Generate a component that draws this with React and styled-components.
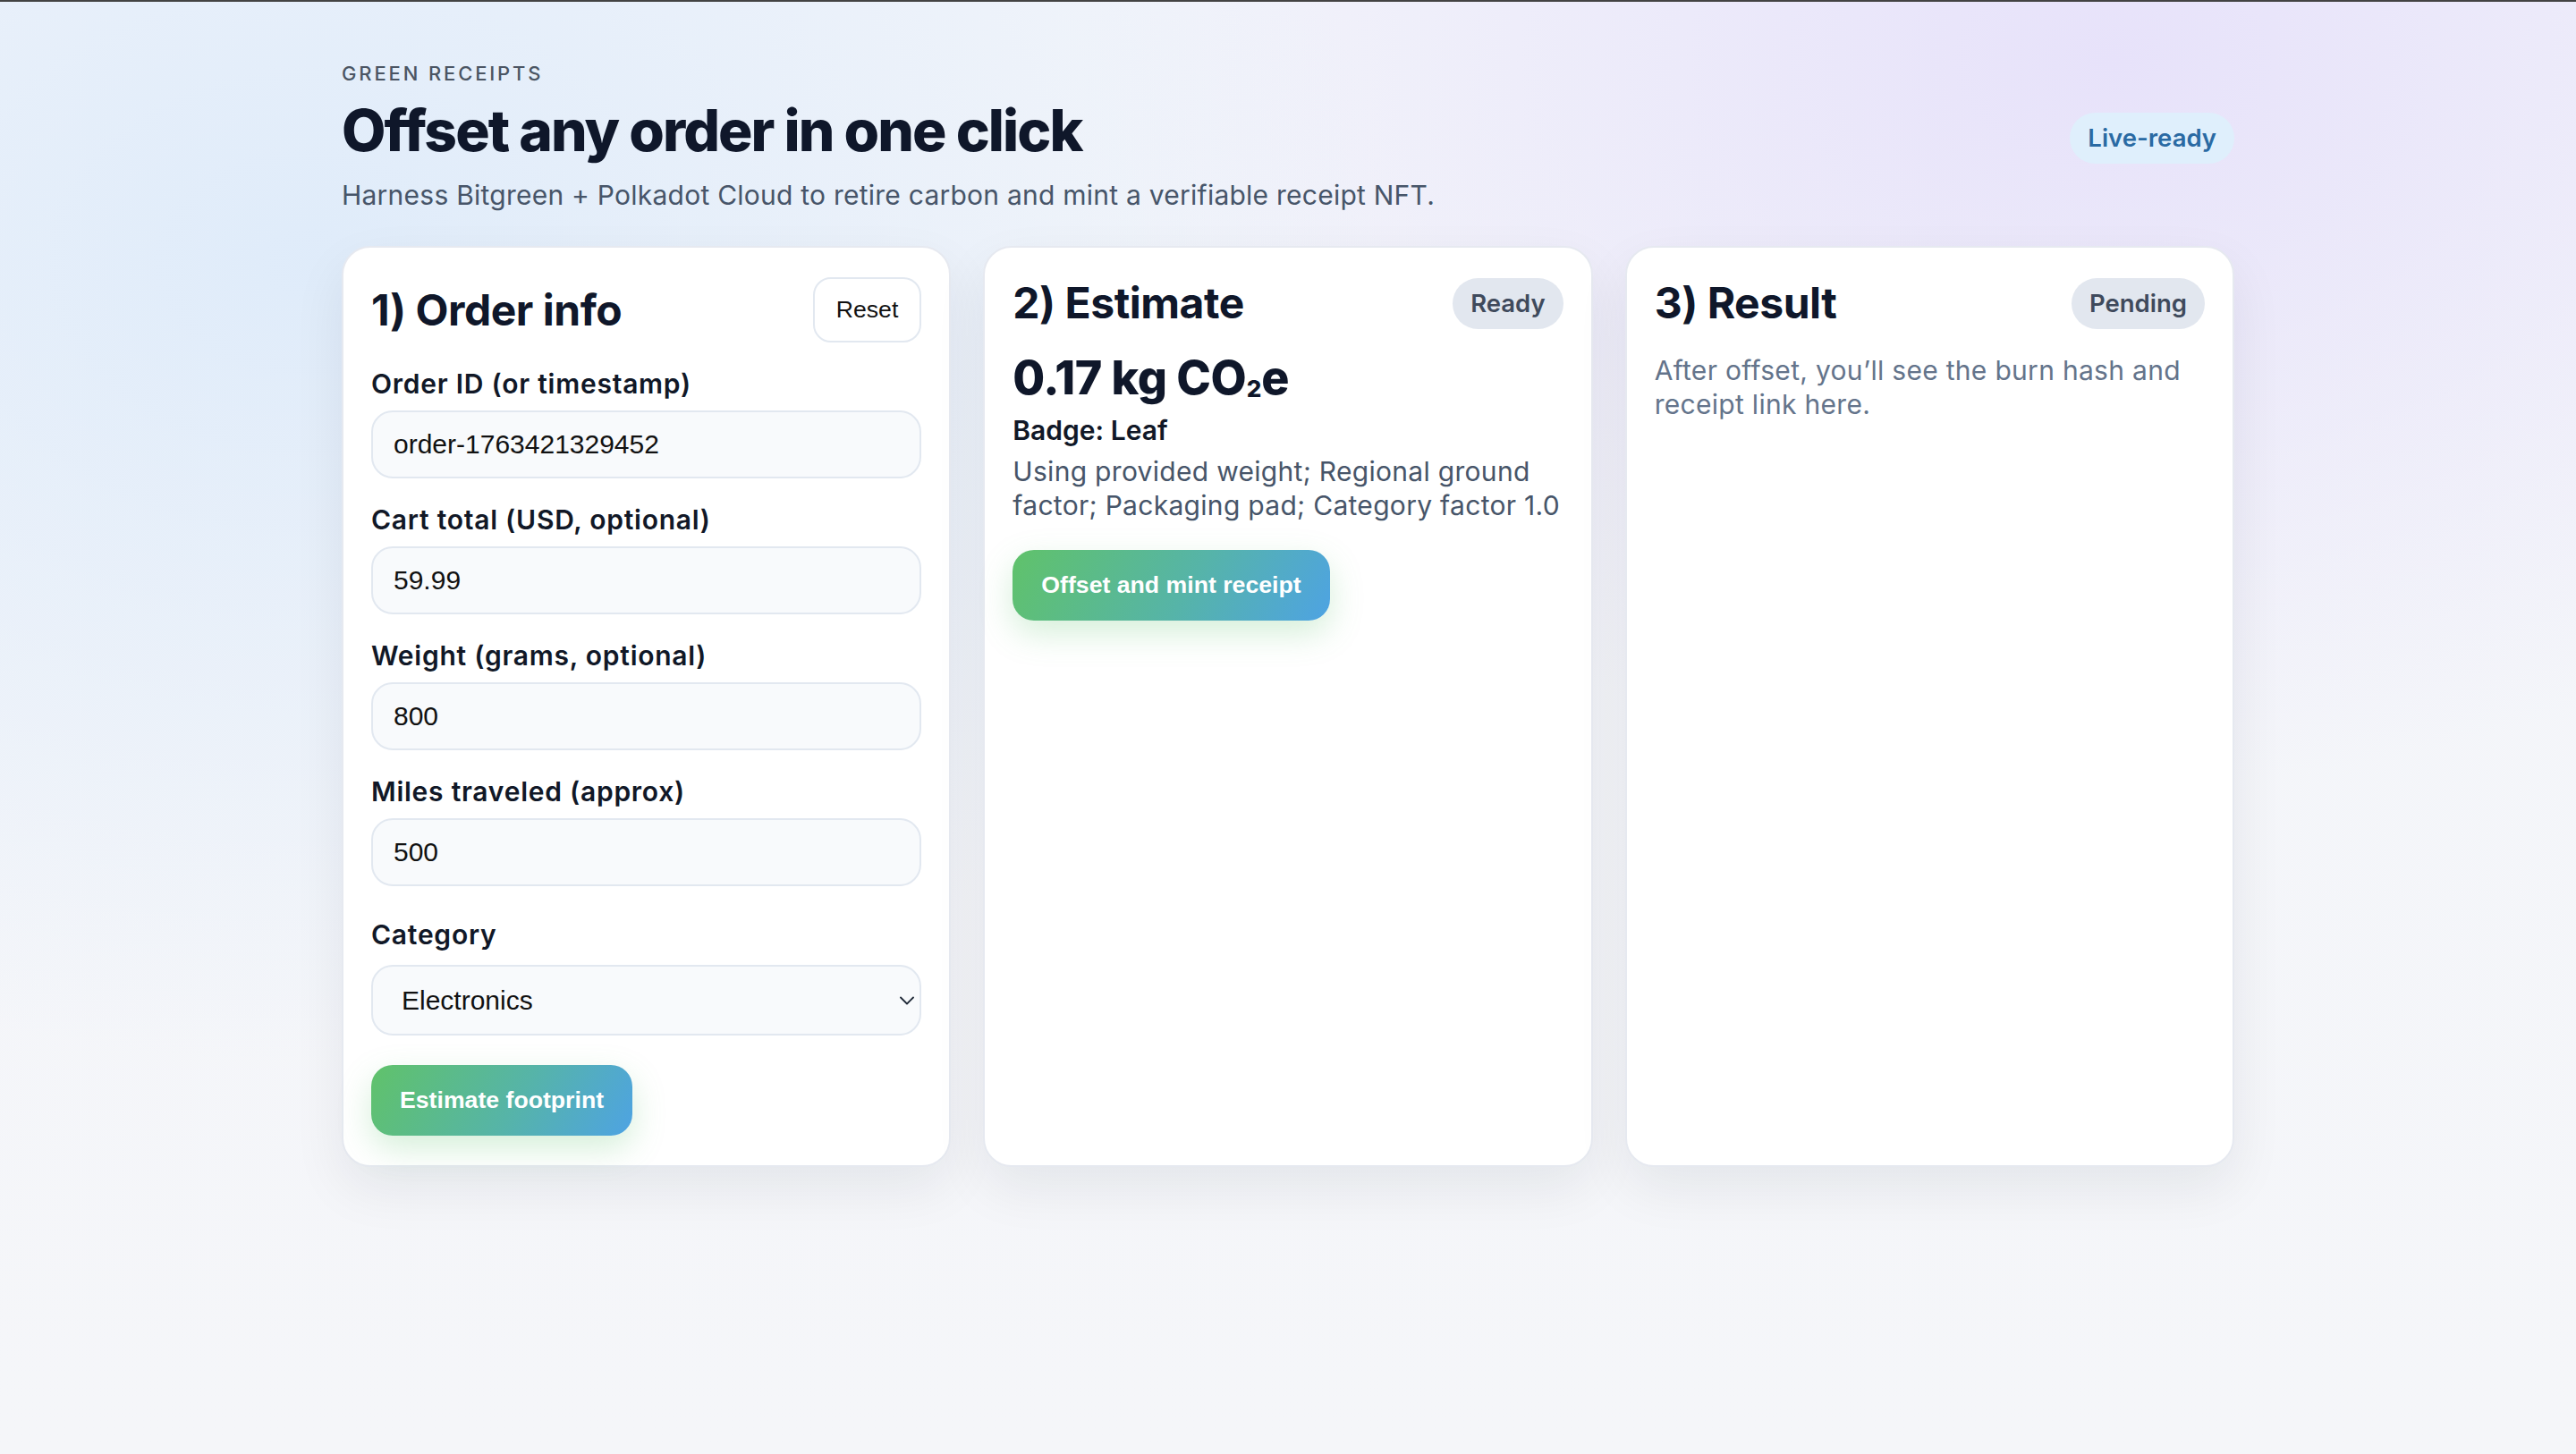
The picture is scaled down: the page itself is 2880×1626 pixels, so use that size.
import React from "react";
import styled, { createGlobalStyle, css } from "styled-components";

const GlobalStyle = createGlobalStyle`
  html, body { margin: 0; padding: 0; }
  body {
    font-family: Inter, "Noto Sans", sans-serif;
    background: #f5f6f9;
    -webkit-font-smoothing: antialiased;
  }
  *, *::before, *::after { box-sizing: border-box; }
`;

const Page = styled.div`
  min-height: 100vh;
  border-top: 2px solid #434343;
  padding: 67px 0 80px;
  background:
    radial-gradient(42% 55% at 12% 18%, rgba(222, 235, 250, 0.95) 0%, rgba(222, 235, 250, 0) 100%),
    radial-gradient(40% 50% at 82% 4%, rgba(231, 226, 250, 1) 0%, rgba(231, 226, 250, 0) 100%),
    linear-gradient(180deg, #f3f5fa 0%, #f5f6f9 100%);
`;

const Container = styled.main`
  width: 2116px;
  margin: 0 auto;
`;

const Header = styled.header`
  display: flex;
  justify-content: space-between;
  align-items: center;
  margin-bottom: 36px;
`;

const HeaderText = styled.div`
  display: flex;
  flex-direction: column;
  gap: 16px;
`;

const Eyebrow = styled.div`
  font-size: 22px;
  line-height: 26px;
  font-weight: 500;
  letter-spacing: 0.13em;
  text-transform: uppercase;
  color: #4b5563;
`;

const Title = styled.h1`
  margin: 0;
  font-size: 64px;
  line-height: 70px;
  font-weight: 800;
  letter-spacing: -0.03em;
  color: #0f172a;
`;

const Subtitle = styled.p`
  margin: 0;
  font-size: 30px;
  line-height: 42px;
  letter-spacing: 0.008em;
  color: #475569;
`;

const pillTones = {
  info: css`
    background: #dfeffc;
    color: #2a6aa3;
  `,
  neutral: css`
    background: #e2e7ef;
    color: #3f4a5c;
  `,
};

const Pill = styled.span`
  display: inline-flex;
  align-items: center;
  height: 57px;
  padding: 0 20px;
  border-radius: 999px;
  font-size: 27.5px;
  font-weight: 600;
  white-space: nowrap;
  ${(p) => pillTones[p.$tone || "neutral"]}
`;

const Grid = styled.section`
  display: grid;
  grid-template-columns: repeat(3, 1fr);
  gap: 36px;
  align-items: stretch;
`;

const Card = styled.div`
  display: flex;
  flex-direction: column;
  background: #ffffff;
  border: 2px solid #e6e9f0;
  border-radius: 32px;
  padding: 33px 31px 33px;
  box-shadow: 0 24px 60px rgba(15, 23, 42, 0.07);
`;

const CardHead = styled.div`
  display: flex;
  justify-content: space-between;
  align-items: center;
`;

const CardTitle = styled.h2`
  margin: 0;
  font-size: 48px;
  line-height: 58px;
  font-weight: 700;
  letter-spacing: -0.01em;
  color: #0f172a;
`;

const GhostButton = styled.button`
  height: 73px;
  padding: 0 24px;
  border: 2px solid #e2e8f0;
  border-radius: 20px;
  background: #ffffff;
  font-family: "Liberation Sans", Arial, sans-serif;
  font-size: 26.67px;
  color: #111111;
  cursor: pointer;
`;

const Form = styled.form`
  display: flex;
  flex-direction: column;
  gap: 28px;
  margin-top: 28px;
`;

const Field = styled.label`
  display: flex;
  flex-direction: column;
  gap: ${(p) => (p.$loose ? 16 : 12)}px;
  margin-top: ${(p) => (p.$loose ? 8 : 0)}px;
`;

const LabelText = styled.span`
  font-size: 30px;
  line-height: 36px;
  font-weight: 600;
  letter-spacing: 0.025em;
  color: #111827;
`;

const fieldBox = css`
  width: 100%;
  border: 2px solid #e2e8f0;
  border-radius: 24px;
  background: #f8fafc;
  font-family: "Liberation Sans", Arial, sans-serif;
  font-size: 30px;
  color: #111111;
  outline: none;
`;

const Input = styled.input`
  ${fieldBox}
  height: 76px;
  padding: 0 23px;
`;

const SelectWrap = styled.div`
  position: relative;
`;

const Select = styled.select`
  ${fieldBox}
  height: 79px;
  padding: 0 60px 0 32px;
  appearance: none;
  -webkit-appearance: none;
`;

const Chevron = styled.svg`
  position: absolute;
  right: 8px;
  top: 50%;
  transform: translateY(-50%);
  pointer-events: none;
`;

const PrimaryButton = styled.button`
  align-self: flex-start;
  height: 79px;
  padding: 0 32px;
  margin-top: ${(p) => p.$offset || 0}px;
  border: none;
  border-radius: 24px;
  background: linear-gradient(120deg, #60c26a 0%, #56b4a8 55%, #4ea3e3 100%);
  color: #ffffff;
  font-family: "Liberation Sans", Arial, sans-serif;
  font-size: 26.67px;
  font-weight: 700;
  box-shadow: 0 14px 36px rgba(94, 193, 107, 0.26);
  cursor: pointer;
`;

const Body = styled.div`
  display: flex;
  flex-direction: column;
  margin-top: 24px;
`;

const Amount = styled.div`
  font-size: 52px;
  line-height: 62px;
  font-weight: 800;
  letter-spacing: -0.01em;
  color: #0f172a;
`;

const Sub = styled.sub`
  font-size: 0.5em;
  line-height: 0;
  vertical-align: -0.12em;
  margin: 0 0.02em;
`;

const BadgeLine = styled.div`
  margin-top: 8px;
  font-size: 30px;
  line-height: 38px;
  font-weight: 600;
  color: #111827;
`;

const Text = styled.p`
  margin: ${(p) => p.$top || 0}px 0 0;
  font-size: 30px;
  line-height: 38px;
  letter-spacing: 0.01em;
  color: ${(p) => (p.$muted ? "#64748b" : "#475569")};
`;

const fields = [
  { label: "Order ID (or timestamp)", value: "order-1763421329452" },
  { label: "Cart total (USD, optional)", value: "59.99" },
  { label: "Weight (grams, optional)", value: "800" },
  { label: "Miles traveled (approx)", value: "500" },
];

export default function App() {
  return (
    <>
      <GlobalStyle />
      <Page>
        <Container>
          <Header>
            <HeaderText>
              <Eyebrow>Green receipts</Eyebrow>
              <Title>Offset any order in one click</Title>
              <Subtitle>
                Harness Bitgreen + Polkadot Cloud to retire carbon and mint a verifiable receipt NFT.
              </Subtitle>
            </HeaderText>
            <Pill $tone="info">Live-ready</Pill>
          </Header>

          <Grid>
            <Card>
              <CardHead>
                <CardTitle>1) Order info</CardTitle>
                <GhostButton type="button">Reset</GhostButton>
              </CardHead>
              <Form onSubmit={(e) => e.preventDefault()}>
                {fields.map((f) => (
                  <Field key={f.label}>
                    <LabelText>{f.label}</LabelText>
                    <Input defaultValue={f.value} />
                  </Field>
                ))}
                <Field $loose>
                  <LabelText>Category</LabelText>
                  <SelectWrap>
                    <Select defaultValue="electronics">
                      <option value="electronics">Electronics</option>
                      <option value="apparel">Apparel</option>
                      <option value="home">Home</option>
                    </Select>
                    <Chevron width="16" height="10" viewBox="0 0 16 10" fill="none">
                      <path d="M1 1.5L8 8.5L15 1.5" stroke="#1f2937" strokeWidth="1.8" strokeLinecap="round" strokeLinejoin="round" />
                    </Chevron>
                  </SelectWrap>
                </Field>
                <PrimaryButton type="submit" $offset={5}>Estimate footprint</PrimaryButton>
              </Form>
            </Card>

            <Card>
              <CardHead>
                <CardTitle>2) Estimate</CardTitle>
                <Pill>Ready</Pill>
              </CardHead>
              <Body>
                <Amount>
                  0.17 kg CO<Sub>2</Sub>e
                </Amount>
                <BadgeLine>Badge: Leaf</BadgeLine>
                <Text $top={8}>
                  Using provided weight; Regional ground factor; Packaging pad; Category factor 1.0
                </Text>
                <PrimaryButton type="button" $offset={31}>Offset and mint receipt</PrimaryButton>
              </Body>
            </Card>

            <Card>
              <CardHead>
                <CardTitle>3) Result</CardTitle>
                <Pill>Pending</Pill>
              </CardHead>
              <Text $muted $top={27}>
                After offset, you’ll see the burn hash and receipt link here.
              </Text>
            </Card>
          </Grid>
        </Container>
      </Page>
    </>
  );
}
